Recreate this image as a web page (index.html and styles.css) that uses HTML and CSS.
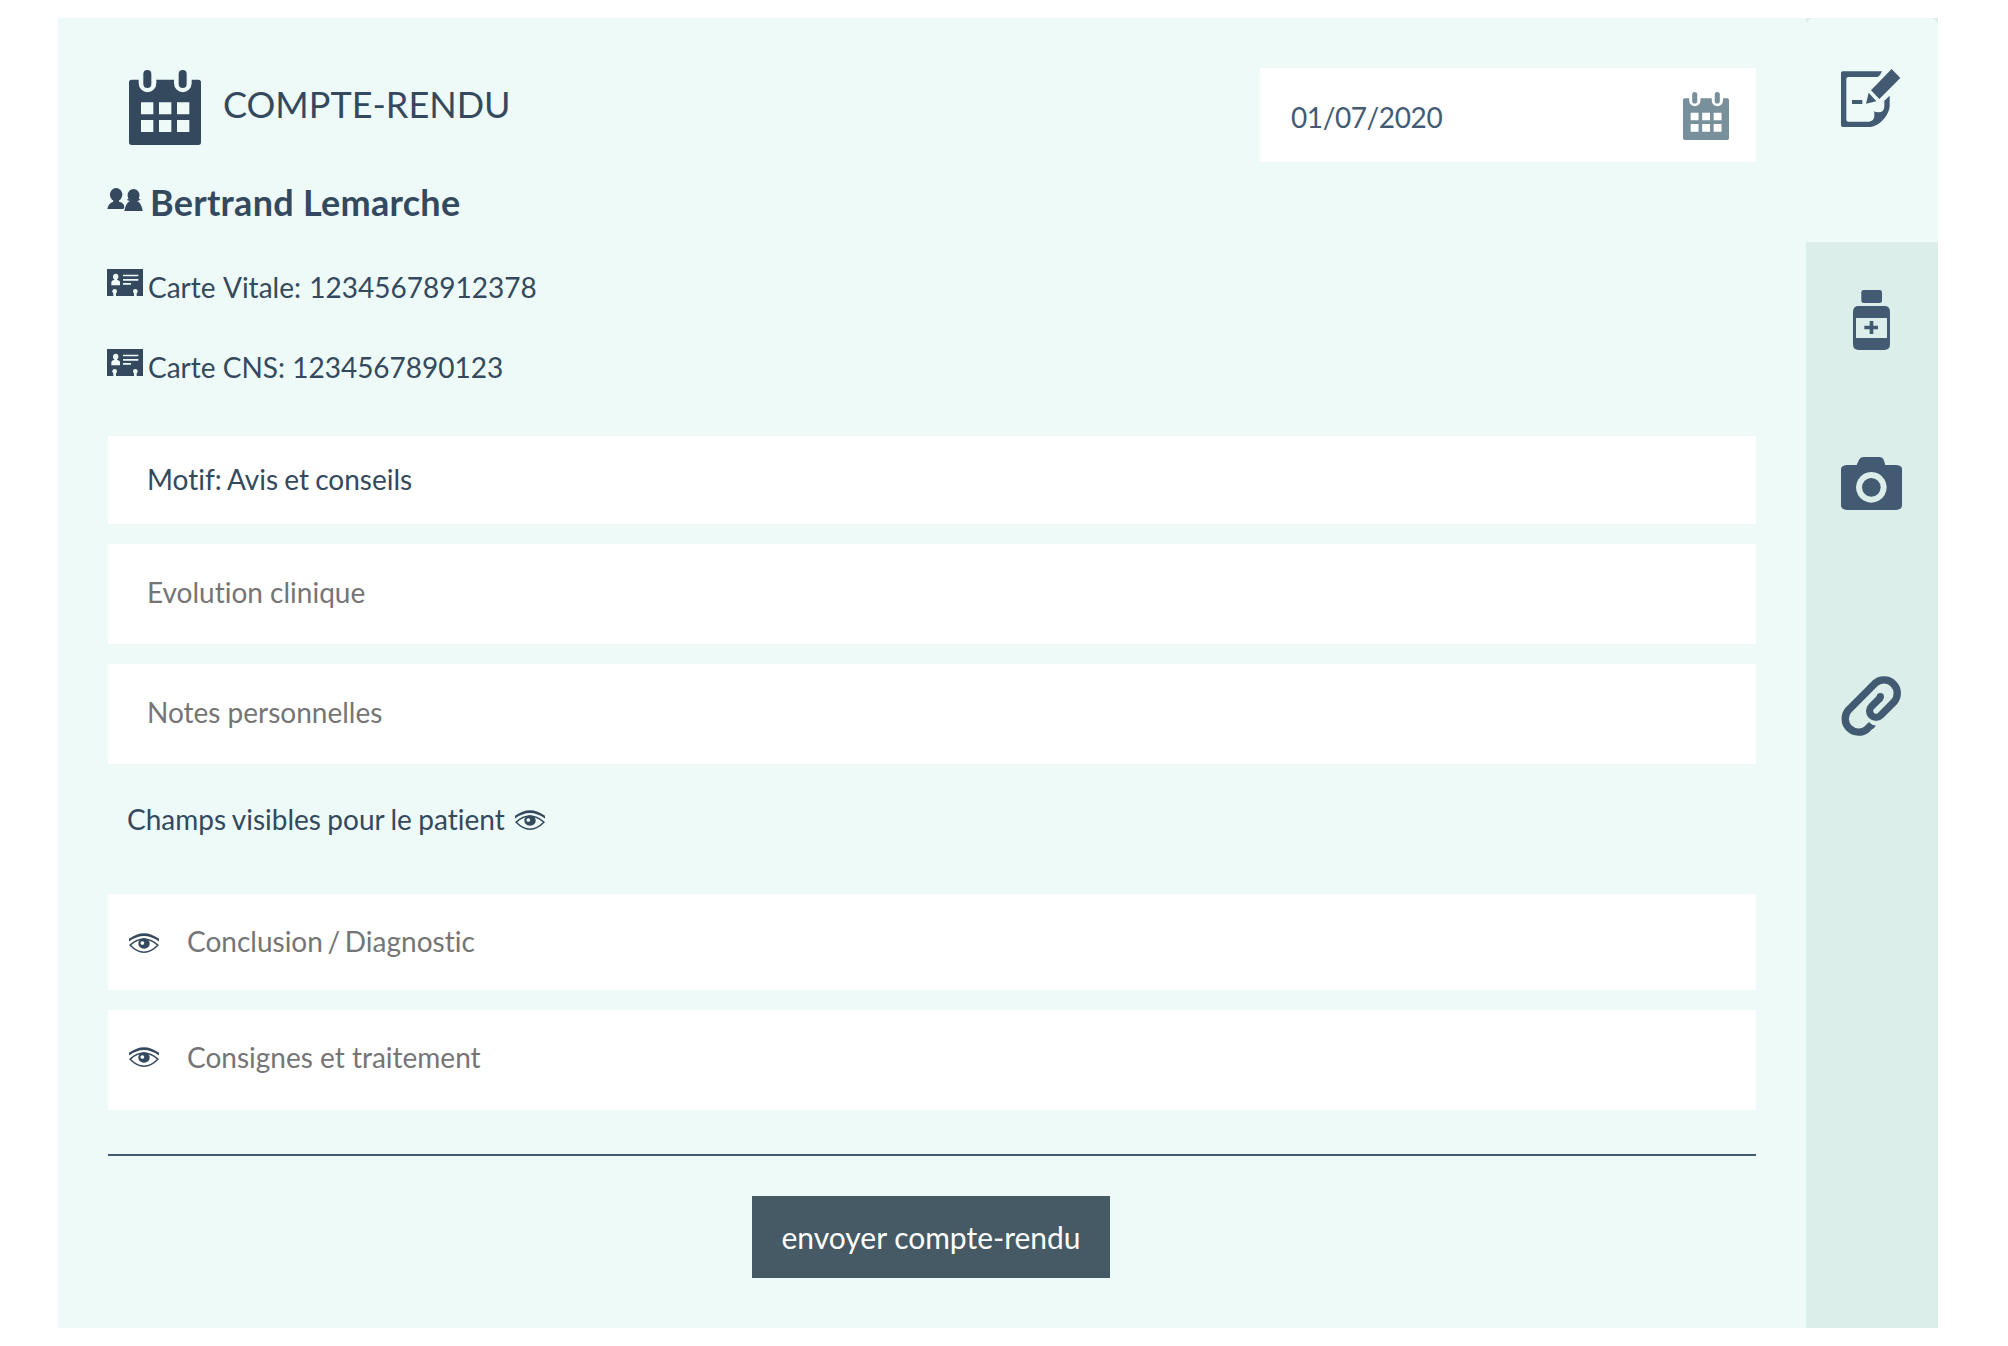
FILE: index.html
```html
<!DOCTYPE html>
<html lang="fr">
<head>
<meta charset="utf-8">
<title>Compte-rendu</title>
<link rel="stylesheet" href="styles.css">
</head>
<body>
<svg class="sprite" width="0" height="0">
  <symbol id="calendar" viewBox="0 0 216 225">
    <rect x="43" width="24" height="54" rx="12"/><rect x="149" width="24" height="54" rx="12"/>
    <path fill-rule="evenodd" d="M8 29H29V40A26 26 0 0 0 82 40V29H135V40A26 26 0 0 0 188 40V29H208q8 0 8 8V217q0 8-8 8H8q-8 0-8-8V37q0-8 8-8zM36 97V133H73V97zM90 97V133H127V97zM144 97V133H181V97zM36 150V186H73V150zM90 150V186H127V150zM144 150V186H181V150z"/>
  </symbol>
  <symbol id="card" viewBox="0 0 108 81">
    <path d="M0 0H108V81H0z"/>
    <g fill="#edfaf8"><ellipse cx="26" cy="23" rx="8" ry="9"/><path d="M22 28h8v5q9 1 9 8v8H13v-8q0-7 9-8zM48 17H94v5H48zM48 30H94v5H48zM48 42H72v5H48z"/><circle cx="23" cy="67" r="7"/><path d="M19 70h8v11h-8zM81 70h8v11h-8z"/><circle cx="85" cy="67" r="7"/></g>
  </symbol>
  <symbol id="eye" viewBox="0 0 90 59">
    <path d="M0 17Q45-17 90 17V25Q45-8 0 25z"/>
    <path d="M3.500 36Q44-1 86.500 36Q45 78 3.500 36z" fill="none" stroke="currentColor" stroke-width="4.500"/>
    <path fill-rule="evenodd" d="M45 15a17 16 0 1 0 .1 0zM40 24a5.500 5.500 0 1 0 .1 0z"/>
  </symbol>
</svg>
<div class="panel">
  <main class="report">
    <header class="top">
      <h1 class="title"><svg class="title-icon"><use href="#calendar"/></svg><span>COMPTE-RENDU</span></h1>
      <div class="date"><span>01/07/2020</span><svg class="date-icon"><use href="#calendar"/></svg></div>
    </header>
    <h2 class="patient">
      <svg class="people" viewBox="0 0 108 70"><ellipse cx="27" cy="20" rx="19" ry="20"/><path d="M18 34H36V42Q52 46 52 58L49 64H0Q4 46 18 42z"/><ellipse cx="80" cy="22" rx="18" ry="19"/><path d="M59 36q6-2 8-6h27q2 4 8 6-5 3-12 4l4 1Q104 48 108 70H52Q56 48 66 41l4-1q-7-1-11-4z"/></svg>
      <span>Bertrand Lemarche</span>
    </h2>
    <p class="id-line vitale"><svg class="card"><use href="#card"/></svg><span>Carte Vitale: 12345678912378</span></p>
    <p class="id-line cns"><svg class="card"><use href="#card"/></svg><span>Carte CNS: 1234567890123</span></p>
    <div class="field reason">Motif: Avis et conseils</div>
    <div class="field empty">Evolution clinique</div>
    <div class="field empty">Notes personnelles</div>
    <p class="visible-note"><span>Champs visibles pour le patient</span><svg class="eye"><use href="#eye"/></svg></p>
    <div class="field shared diagnosis"><svg class="eye"><use href="#eye"/></svg><span>Conclusion / Diagnostic</span></div>
    <div class="field shared treatment"><svg class="eye"><use href="#eye"/></svg><span>Consignes et traitement</span></div>
    <hr class="rule">
    <button class="send" type="button">envoyer compte-rendu</button>
  </main>
  <nav class="tabs">
    <a class="tab active"><svg width="60" height="58" viewBox="0 0 180 174"><path d="M5 7H123Q118 20 110 24H22q-6 0-6 6V152q0 6 6 6H84q15-1 16-16V133q0-4-2-6 6 3 14 3 18 0 18-20V95L146 80V112C144 140 115 172 88 174H5q-5 0-5-5V12q0-5 5-5zM33 93H64V105H33zM152 0L178 27 115 90 90 64zM83 71L106 97 75 104z"/></svg></a>
    <a class="tab bottle"><svg width="37" height="60" viewBox="0 0 111 180"><rect x="25" width="62" height="39" rx="7"/><path fill-rule="evenodd" d="M17 48H94q17 0 17 17V163q0 17-17 17H17q-17 0-17-17V65q0-17 17-17zM9 84V144H102V84z"/><path d="M34 107H50V93H61V107H75V118H61V132H50V118H34z"/></svg></a>
    <a class="tab camera"><svg width="61" height="53" viewBox="0 0 183 159"><path fill-rule="evenodd" d="M16 24H47L54 8Q58 1 67 0H116Q125 1 128 8L133 24H166Q183 26 183 35V147Q181 157 166 159H17Q2 157 0 147V35Q2 26 16 24zM91 45a46 46 0 1 0 .1 0z"/><circle cx="91" cy="91" r="28"/></svg></a>
    <a class="tab clip"><svg width="61" height="61" viewBox="0 0 183 183"><path fill="none" stroke="currentColor" stroke-width="22" d="M92 145.500L79.500 158A40 40 0 0 1 23 101.500L102 22A40 40 0 0 1 158.500 78.500L118.500 118.500A19 19 0 0 1 91.500 91.500L119 64"/><path d="M84 142Q93 147 105 149L95 160z"/><circle cx="118" cy="62" r="11"/></svg></a>
  </nav>
</div>
</body>
</html>
```
FILE: styles.css
```css
* { box-sizing: border-box; }
body {
  margin: 0;
  padding: 18px 70px 18px 58px;
  background: #fff;
  color: #34495e;
  font: 28px/34px Lato, "Liberation Sans", sans-serif;
  font-variant-ligatures: none;
}
svg { display: block; flex: none; fill: currentColor; }
.sprite { position: absolute; }
h1, h2, p { margin: 0; font-weight: 400; }

.panel { display: flex; height: 1310px; background: #edfaf8; }
.report {
  display: flex;
  flex-direction: column;
  width: 1748px;
  padding: 50px 50px 0;
}
.top { display: flex; justify-content: space-between; height: 94px; }
.title {
  display: flex;
  gap: 22.5px;
  padding: 2px 0 0 20.5px;
  font-size: 36px;
  line-height: 69px;
}
.title-icon { width: 72px; height: 75px; }
.date {
  display: flex;
  justify-content: space-between;
  width: 496px;
  padding: 24px 27px 0 31px;
  background: #fff;
  color: #425b73;
  letter-spacing: -0.4px;
  line-height: 50px;
}
.date-icon { width: 46px; height: 48px; color: #78909c; }

.patient {
  display: flex;
  gap: 6px;
  height: 107px;
  padding-top: 19px;
  font-size: 36px;
  font-weight: 700;
  letter-spacing: 0.28px;
  line-height: 43px;
}
.people { width: 36px; height: 23px; margin: 7px 0 0 -1px; }
.patient span { margin-left: 1px; }
.id-line { display: flex; gap: 5px; height: 80px; line-height: 36px; }
.card { width: 36px; height: 27px; margin-left: -1px; }
.vitale { word-spacing: 1.2px; }
.cns { height: 87px; }

.field {
  height: 100px;
  margin-bottom: 20px;
  padding-left: 39px;
  background: #fff;
}
.reason { height: 88px; line-height: 87px; word-spacing: -1px; }
.empty { line-height: 96px; color: #757575; }
.visible-note {
  display: flex;
  gap: 10px;
  height: 110px;
  padding: 18px 0 0 19px;
  word-spacing: -0.8px;
}
.eye { width: 30px; height: 20px; color: #34495e; }
.visible-note .eye { margin-top: 8px; }
.shared {
  display: flex;
  gap: 28px;
  padding-left: 21px;
  color: #757575;
}
.diagnosis { height: 96px; line-height: 95px; word-spacing: -2.5px; }
.diagnosis .eye { margin-top: 39px; }
.treatment { line-height: 94px; }
.treatment .eye { margin-top: 37px; }

.rule {
  width: 100%;
  height: 2px;
  margin: 24px 0 40px;
  border: 0;
  background: #425b73;
}
.send {
  align-self: center;
  width: 358px;
  height: 82px;
  margin-right: 2px;
  padding: 0;
  border: 0;
  background: #455a64;
  color: #fff;
  font: 30px/82px Lato, "Liberation Sans", sans-serif;
}

.tabs { width: 132px; background: #dbeeea; color: #425b73; }
.tab { display: flex; justify-content: center; height: 167px; padding-right: 2px; }
.active {
  height: 224px;
  padding-top: 51px;
  border-radius: 8px 8px 0 0;
  background: #edfaf8;
}
.bottle { padding-top: 48px; }
.camera { height: 218px; padding-top: 48px; }
.clip { padding-top: 49px; }
```
